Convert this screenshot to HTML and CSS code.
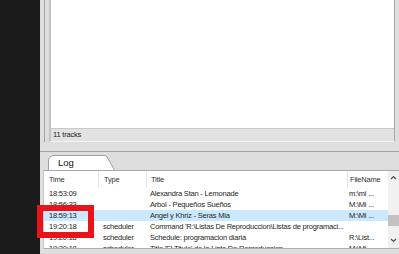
FILE: index.html
```html
<!DOCTYPE html>
<html lang="en">
<head>
    <meta charset="UTF-8">
    <title>Playlist Log</title>
    <link rel="stylesheet" href="styles.css">
</head>
<body>
    <div class="sidebar"></div>
    <div class="main">
        <div class="top-panel">
            <div class="frame">
                <div class="tracks"></div>
                <div class="status">11 tracks</div>
            </div>
        </div>
        <div class="splitter"></div>
        <div class="tabs">
            <div class="tab">Log</div>
        </div>
        <div class="log">
            <div class="grid">
                <div class="row head">
                    <div class="c-time">Time</div>
                    <div class="c-type">Type</div>
                    <div class="c-title">Title</div>
                    <div class="c-file">FileName</div>
                </div>
                <div class="row">
                    <div class="c-time">18:53:09</div>
                    <div class="c-type"></div>
                    <div class="c-title">Alexandra Stan - Lemonade</div>
                    <div class="c-file">m:\mi ...</div>
                </div>
                <div class="row">
                    <div class="c-time">18:56:33</div>
                    <div class="c-type"></div>
                    <div class="c-title">Arbol - Pequeños Sueños</div>
                    <div class="c-file">M:\Mi ...</div>
                </div>
                <div class="row selected">
                    <div class="c-time">18:59:13</div>
                    <div class="c-type"></div>
                    <div class="c-title">Angel y Khriz - Seras Mia</div>
                    <div class="c-file">M:\Mi ...</div>
                </div>
                <div class="row">
                    <div class="c-time">19:20:18</div>
                    <div class="c-type">scheduler</div>
                    <div class="c-title wide">Command 'R:\Listas De Reproduccion\Listas de programaci...</div>
                </div>
                <div class="row">
                    <div class="c-time">19:20:18</div>
                    <div class="c-type">scheduler</div>
                    <div class="c-title">Schedule: programacion diaria</div>
                    <div class="c-file">R:\List...</div>
                </div>
                <div class="row">
                    <div class="c-time">19:20:18</div>
                    <div class="c-type">scheduler</div>
                    <div class="c-title">Title 'El Titulo' de la Lista De Reproduccion</div>
                    <div class="c-file">M:\Mi ...</div>
                </div>
            </div>
            <div class="scrollbar">
                <svg class="arrow" width="11" height="14" viewBox="0 0 11 14"><path d="M3 8 L5.5 5.5 L8 8" fill="none" stroke="#505050" stroke-width="1.2"/></svg>
                <div class="track"><div class="thumb"></div></div>
                <svg class="arrow" width="11" height="14" viewBox="0 0 11 14"><path d="M3 5 L5.5 7.5 L8 5" fill="none" stroke="#505050" stroke-width="1.2"/></svg>
            </div>
        </div>
        <div class="bottom"></div>
    </div>
    <div class="highlight"></div>
</body>
</html>
```

FILE: styles.css
```css
body {
    margin: 0;
    width: 399px;
    height: 254px;
    overflow: hidden;
    display: flex;
    font-family: "Liberation Sans", Arial, sans-serif;
    font-size: 7.5px;
    letter-spacing: -0.2px;
    color: #1e1e1e;
    position: relative;
}

.sidebar {
    width: 40px;
    background-color: #1b1b1b;
}

.main {
    flex: 1;
    display: flex;
    flex-direction: column;
    background-color: #dedede;
    min-width: 0;
}

.top-panel {
    height: 142px;
    margin: 0 4px 0 4px;
    padding-left: 4px;
    border-left: 1px solid #a3a3a3;
    display: flex;
}

.frame {
    flex: 1;
    display: flex;
    flex-direction: column;
    border-left: 2px solid #c4c4c4;
    border-right: 1px solid #a8a8a8;
    border-bottom: 1px solid #f4f4f4;
}

.tracks {
    flex: 1;
    background-color: #fff;
    border-bottom: 1px solid #c8c8c8;
}

.status {
    height: 12px;
    line-height: 12px;
    padding-left: 2px;
    background-color: #e2e2e2;
    color: #222;
}

.splitter {
    height: 9px;
    border-bottom: 1px solid #a5a5a5;
}

.tabs {
    height: 18px;
    display: flex;
    align-items: flex-end;
    padding-left: 8px;
}

.tab {
    width: 67px;
    height: 15px;
    line-height: 16px;
    padding-left: 10px;
    box-sizing: border-box;
    font-size: 9.5px;
    letter-spacing: 0;
    color: #111;
    background: url("data:image/svg+xml,%3Csvg xmlns='http://www.w3.org/2000/svg' width='67' height='15'%3E%3Cpath d='M0.5 15 L0.5 5 Q1 1 5 0.5 L56 0.5 Q58 0.5 59 2 L66.5 15' fill='%23fff' stroke='%23a0a0a0'/%3E%3C/svg%3E") no-repeat;
}

.log {
    height: 77px;
    margin-left: 3px;
    border-top: 1px solid #a8a8a8;
    border-left: 1px solid #c8c8c8;
    border-bottom: 1px solid #b0b0b0;
    display: flex;
    background-color: #fff;
}

.grid {
    flex: 1;
    overflow: hidden;
}

.row {
    display: flex;
    height: 11px;
    line-height: 11px;
    white-space: nowrap;
}

.row.head {
    height: 17px;
    line-height: 17px;
    color: #333;
}

.row.selected {
    background-color: #cce8ff;
}

.row > div {
    box-sizing: border-box;
    padding-left: 5px;
    overflow: hidden;
}

.c-time { width: 54px; }
.c-type { width: 48px; }
.c-title { width: 201px; padding-left: 4px !important; }
.c-file { width: 41px; padding-left: 2px !important; }
.c-title.wide { overflow: visible !important; }

.head > div + div {
    border-left: 1px solid #e5e5e5;
}

.scrollbar {
    width: 11px;
    background-color: #f0f0f0;
    display: flex;
    flex-direction: column;
}

.arrow {
    display: block;
}

.track {
    flex: 1;
    padding-top: 30px;
}

.thumb {
    height: 11px;
    background-color: #c2c2c2;
}

.bottom {
    flex: 1;
}

.highlight {
    position: absolute;
    left: 37px;
    top: 205px;
    width: 57px;
    height: 33px;
    box-sizing: border-box;
    border: 6px solid #e8141c;
}
```
